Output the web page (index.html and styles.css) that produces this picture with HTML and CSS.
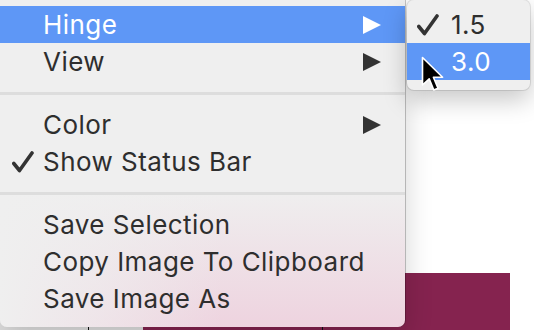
FILE: index.html
```html
<!DOCTYPE html>
<html>
<head>
<meta charset="utf-8">
<link rel="stylesheet" href="styles.css">
</head>
<body>
<div class="screen">
  <div class="backdrop-gray"></div>
  <div class="backdrop-magenta"></div>
  <div class="backdrop-line line-a"></div>
  <div class="backdrop-line line-b"></div>

  <div class="menu">
    <div class="item active">
      <span class="check"></span><span class="label">Hinge</span>
      <svg class="arrow" width="18" height="18" viewBox="0 0 18 18"><polygon points="0,0 18,9 0,18"/></svg>
    </div>
    <div class="item">
      <span class="check"></span><span class="label">View</span>
      <svg class="arrow" width="18" height="18" viewBox="0 0 18 18"><polygon points="0,0 18,9 0,18"/></svg>
    </div>
    <div class="sep"></div>
    <div class="item">
      <span class="check"></span><span class="label">Color</span>
      <svg class="arrow" width="18" height="18" viewBox="0 0 18 18"><polygon points="0,0 18,9 0,18"/></svg>
    </div>
    <div class="item">
      <span class="check"><svg width="22" height="22" viewBox="0 0 22 22"><polyline points="1.8,12.5 7.5,19.5 20,2" /></svg></span><span class="label">Show Status Bar</span>
    </div>
    <div class="sep"></div>
    <div class="item"><span class="check"></span><span class="label">Save Selection</span></div>
    <div class="item"><span class="check"></span><span class="label">Copy Image To Clipboard</span></div>
    <div class="item"><span class="check"></span><span class="label">Save Image As</span></div>
  </div>

  <div class="submenu">
    <div class="sub-item">
      <span class="sub-check"><svg width="22" height="22" viewBox="0 0 22 22"><polyline points="1.8,12.5 7.5,19.5 20,2" /></svg></span><span class="label">1.5</span>
    </div>
    <div class="sub-item active">
      <span class="sub-check"></span><span class="label">3.0</span>
    </div>
  </div>

  <svg class="cursor" width="25" height="37" viewBox="0 0 25 37">
    <path d="M1.5,1.5 L1.5,29 L8.2,22.8 L12.8,34 L17,32.2 L12.4,21.2 L21.6,21.2 Z" fill="#000" stroke="#fff" stroke-width="1.6" stroke-linejoin="round"/>
  </svg>
</div>
</body>
</html>
```

FILE: styles.css
```css
html, body {
  margin: 0;
  padding: 0;
  background: #ffffff;
}

.screen {
  position: relative;
  width: 534px;
  height: 330px;
  overflow: hidden;
  font-family: "Inter", "Noto Sans", sans-serif;
}

.backdrop-gray {
  position: absolute;
  left: 0;
  top: 300px;
  width: 143px;
  height: 30px;
  background: #e2e2e2;
}

.backdrop-magenta {
  position: absolute;
  left: 143px;
  top: 273px;
  width: 367px;
  height: 57px;
  background: #85234f;
}

.backdrop-line {
  position: absolute;
  top: 310px;
  width: 1px;
  height: 20px;
  background: #111;
}
.line-a { left: 88px; }
.line-b { left: 322px; }

.menu {
  position: relative;
  z-index: 2;
  width: 405px;
  padding: 6px 0 10px;
  border-radius: 0 0 7px 7px;
  background:
    linear-gradient(to right, #efefef 0%, rgba(239,239,239,0.6) 25%, rgba(239,239,239,0) 55%),
    linear-gradient(to bottom, #efefef 0%, #efefef 58%, #eed3df 100%);
  box-shadow: 1px 0 0 0 rgba(0,0,0,0.22), 0 10px 28px rgba(0,0,0,0.18);
  color: #2e2e2e;
}

.item {
  display: flex;
  align-items: center;
  height: 37px;
  font-size: 26px;
  letter-spacing: 0.45px;
}

.item.active {
  background: #5e97f6;
  color: #ffffff;
}

.check {
  width: 43px;
  flex: none;
  display: flex;
  justify-content: flex-start;
  padding-left: 12px;
  box-sizing: border-box;
}

.check svg polyline,
.sub-check svg polyline {
  fill: none;
  stroke: #333;
  stroke-width: 3.6;
  stroke-linecap: round;
  stroke-linejoin: round;
}

.label {
  flex: 1;
}

.arrow {
  flex: none;
  margin-right: 24px;
  fill: #333;
}

.item.active .arrow {
  fill: #ffffff;
}

.sep {
  height: 3px;
  margin: 12px 0 11px;
  background: #dddddd;
}

.submenu {
  position: absolute;
  z-index: 3;
  left: 407px;
  top: 0;
  width: 123px;
  padding: 6px 0 10px;
  background: #efefef;
  border-radius: 7px;
  box-shadow: 0 0 0 1px rgba(0,0,0,0.1), 0 10px 24px rgba(0,0,0,0.22);
  color: #2e2e2e;
}

.sub-item {
  display: flex;
  align-items: center;
  height: 37px;
  font-size: 26px;
  letter-spacing: 0.45px;
}

.sub-item.active {
  background: #5e97f6;
  color: #ffffff;
}

.sub-check {
  width: 44px;
  flex: none;
  display: flex;
  padding-left: 10px;
  box-sizing: border-box;
}

.cursor {
  position: absolute;
  z-index: 4;
  left: 421px;
  top: 56px;
}
```
